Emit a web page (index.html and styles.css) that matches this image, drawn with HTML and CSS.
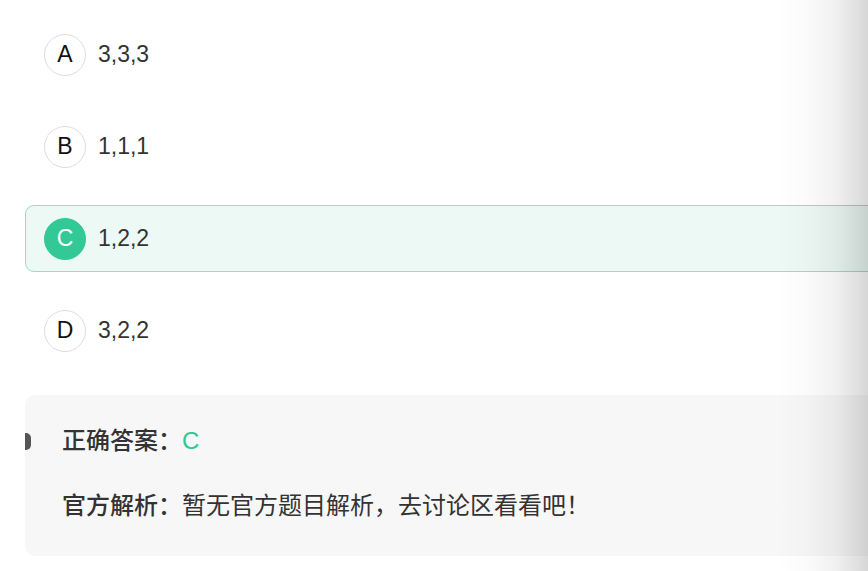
FILE: index.html
```html
<!DOCTYPE html>
<html lang="zh-CN">
<head>
<meta charset="utf-8">
<title>题目</title>
<link rel="stylesheet" href="styles.css">
</head>
<body>
<div class="page">
  <ul class="options">
    <li class="option"><span class="badge">A</span><span class="opt-text">3,3,3</span></li>
    <li class="option"><span class="badge">B</span><span class="opt-text">1,1,1</span></li>
    <li class="option selected"><span class="badge">C</span><span class="opt-text">1,2,2</span></li>
    <li class="option"><span class="badge">D</span><span class="opt-text">3,2,2</span></li>
  </ul>
  <div class="analysis">
    <span class="marker"></span>
    <p class="line"><span class="label">正确答案：</span><span class="answer">C</span></p>
    <p class="line"><span class="label">官方解析：</span>暂无官方题目解析，去讨论区看看吧！</p>
  </div>
</div>
<div class="edge-shadow"></div>
</body>
</html>
```
FILE: styles.css
```css
html, body {
  margin: 0;
  padding: 0;
  background: #ffffff;
  overflow: hidden;
  height: 571px;
}
body {
  font-family: "Liberation Sans", "Noto Sans CJK SC", sans-serif;
  color: #333333;
}
.page {
  width: 900px;
  padding: 21px 0 0 25px;
}
.options {
  list-style: none;
  margin: 0;
  padding: 0;
  display: flex;
  flex-direction: column;
  gap: 25px;
}
.option {
  height: 67px;
  box-sizing: border-box;
  display: flex;
  align-items: center;
  gap: 12px;
  padding-left: 18px;
  border: 1px solid transparent;
  border-radius: 9px;
}
.option.selected {
  background: #edf9f5;
  border-color: #96dec1;
}
.badge {
  width: 42px;
  height: 42px;
  box-sizing: border-box;
  border: 1px solid #dedede;
  border-radius: 50%;
  display: flex;
  align-items: center;
  justify-content: center;
  font-size: 23px;
  color: #111111;
  background: #ffffff;
}
.selected .badge {
  background: #33c997;
  border-color: #33c997;
  color: #ffffff;
}
.opt-text {
  font-size: 23px;
  color: #333333;
}
.analysis {
  position: relative;
  margin-top: 31px;
  height: 161px;
  box-sizing: border-box;
  background: #f7f7f7;
  border-radius: 10px;
  padding: 29px 0 0 37px;
  display: flex;
  flex-direction: column;
  gap: 31px;
}
.marker {
  position: absolute;
  left: 0;
  top: 38px;
  width: 6px;
  height: 17px;
  background: #555555;
  border-radius: 0 5px 5px 0;
}
.line {
  margin: 0;
  font-size: 24px;
  line-height: 34px;
  color: #333333;
}
.label {
  font-weight: 500;
}
.answer {
  color: #2fc795;
}
.edge-shadow {
  position: absolute;
  top: 0;
  right: 0;
  width: 90px;
  height: 571px;
  background: linear-gradient(to right, rgba(0,0,0,0) 0%, rgba(0,0,0,0.02) 35%, rgba(0,0,0,0.06) 65%, rgba(0,0,0,0.12) 88%, rgba(0,0,0,0.16) 100%);
  pointer-events: none;
}
```
